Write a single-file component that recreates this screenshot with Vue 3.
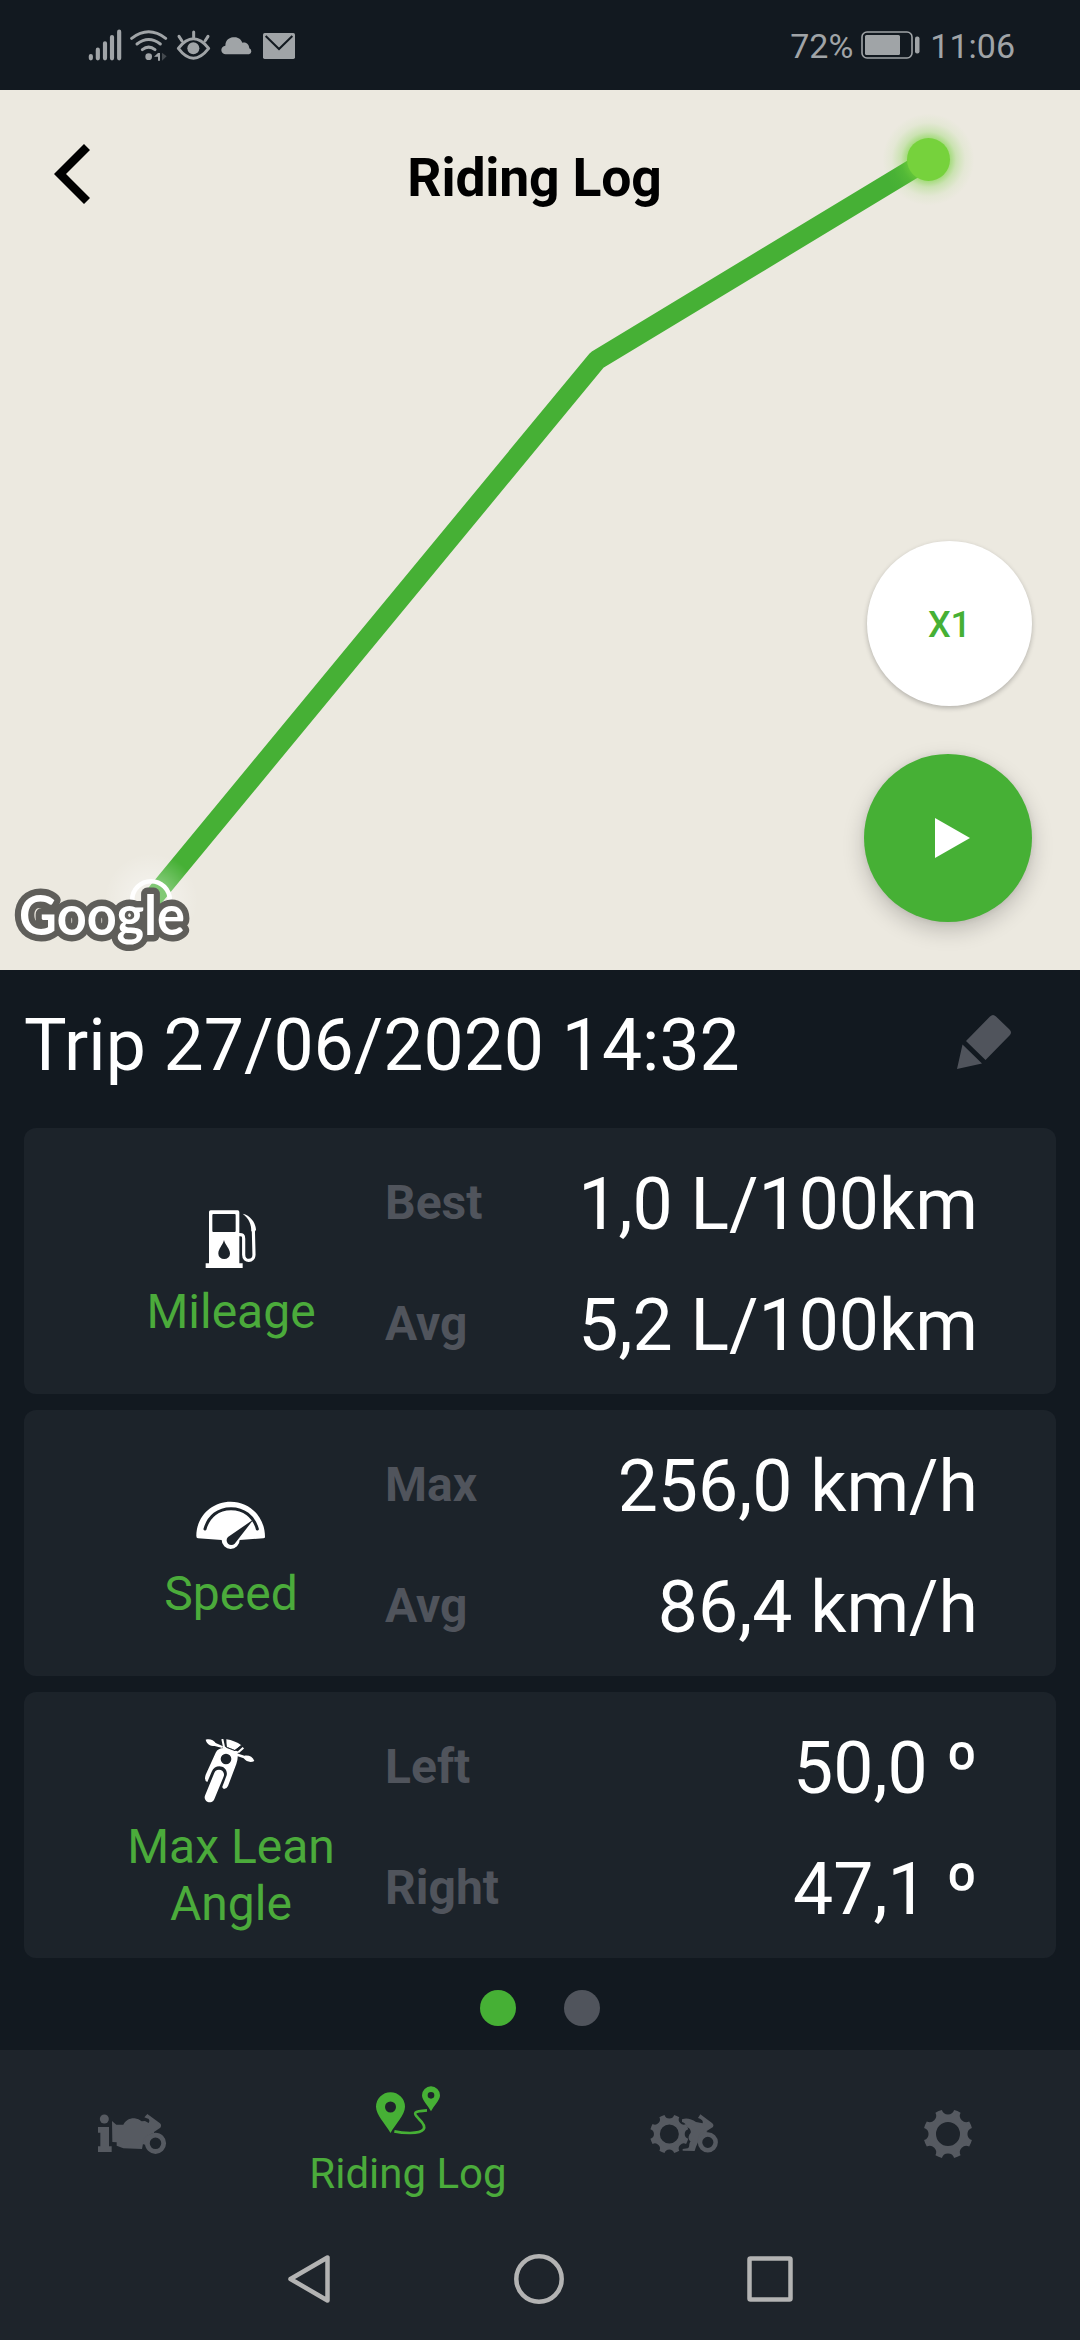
<script setup>
const cards = [
  { icon: 'fuel', title: 'Mileage', rows: [['Best', '1,0 L/100km'], ['Avg', '5,2 L/100km']] },
  { icon: 'gauge', title: 'Speed', rows: [['Max', '256,0 km/h'], ['Avg', '86,4 km/h']] },
  { icon: 'lean', title: 'Max Lean Angle', rows: [['Left', '50,0 º'], ['Right', '47,1 º']] },
]

// Eight-toothed gear with scalloped notches and a round hole.
function gear(cx, cy, r, hole) {
  const half = 0.25
  const n = r * 0.26
  const at = (a) => `${(cx + r * Math.sin(a)).toFixed(2)},${(cy - r * Math.cos(a)).toFixed(2)}`
  let d = `M${at(half)}`
  for (let k = 1; k <= 8; k++) {
    const a = (k * Math.PI) / 4
    d += `A${r},${r} 0 0 1 ${at(a - half)}A${n},${n} 0 0 0 ${at(a + half)}`
  }
  return `${d}ZM${cx - hole},${cy}a${hole},${hole} 0 1 0 ${hole * 2},0a${hole},${hole} 0 1 0 ${-hole * 2},0Z`
}
const bigGear = gear(1044, 522, 74, 36)
const smallGear = gear(208, 523, 58.5, 28.5)
</script>

<template>
  <div class="screen">
    <header class="status">
      <div class="status-icons">
        <svg class="signal" viewBox="54 54 105 102" width="35" height="34">
          <path d="M62.500 138v7M83.500 119v26M105 100v45M126 81v64M147.500 65v80" fill="none" stroke="currentColor" stroke-width="12.500" stroke-linecap="round" />
        </svg>
        <svg class="wifi" viewBox="180 54 114 102" width="38" height="34">
          <g fill="none" stroke="currentColor" stroke-width="9" stroke-linecap="round">
            <path d="M185 85Q236 46 287 85" />
            <path d="M201 102Q236 75 271 102" />
            <path d="M217 119Q236 104 255 119" />
          </g>
          <circle cx="236" cy="140" r="10" fill="currentColor" />
          <path d="M252 140l12-11h6v23h-6v-12z" fill="currentColor" />
          <path d="M276 128v24l14-13z" fill="currentColor" opacity=".35" />
        </svg>
        <svg class="eye" viewBox="318 57 105 96" width="35" height="32">
          <g fill="none" stroke="currentColor" stroke-width="9" stroke-linecap="round" stroke-linejoin="round">
            <path d="M325 115Q370 58 416 115Q370 174 325 115z" />
            <path d="M371 66v16M327 79l9 14M414 79l-9 14" />
          </g>
          <circle cx="370" cy="115" r="18" fill="currentColor" />
        </svg>
        <svg class="cloud" viewBox="453 75 96 57" width="32" height="19">
          <path d="M468 130a13 13 0 0 1-2-26C467 84 480 79 494 79c12 0 19 7 23 16 14-2 20 6 21 17a9.500 9.500 0 0 1-1 18z" fill="currentColor" />
        </svg>
        <svg class="mail" viewBox="579 66 96 84" width="32" height="28">
          <rect x="579" y="69" width="96" height="78" rx="5" fill="currentColor" />
          <path d="M587 78l40 39 40-39" fill="none" stroke="#121920" stroke-width="6" />
        </svg>
      </div>
      <div class="status-right">
        <span>72%</span>
        <svg class="battery" viewBox="0 0 60 28" width="60" height="28">
          <rect x="1" y="1" width="50" height="26" rx="5" fill="none" stroke="currentColor" stroke-width="1.600" />
          <rect x="4" y="4" width="35" height="20" rx="1.500" fill="currentColor" />
          <rect x="54" y="5.500" width="4.500" height="17" rx="2" fill="currentColor" />
        </svg>
        <span>11:06</span>
      </div>
    </header>

    <section class="map">
      <svg class="route" viewBox="0 90 1080 880" width="1080" height="880">
        <defs>
          <radialGradient id="endGlow">
            <stop offset=".4" stop-color="#76d23c" stop-opacity=".75" />
            <stop offset=".6" stop-color="#76d23c" stop-opacity=".28" />
            <stop offset=".8" stop-color="#76d23c" stop-opacity=".07" />
            <stop offset="1" stop-color="#76d23c" stop-opacity="0" />
          </radialGradient>
          <radialGradient id="startGlow">
            <stop offset=".4" stop-color="#fff" stop-opacity=".32" />
            <stop offset="1" stop-color="#fff" stop-opacity="0" />
          </radialGradient>
        </defs>
        <path d="M152 899L597 360 928.500 159.500" fill="none" stroke="#46b035" stroke-width="20" stroke-linejoin="bevel" />
        <circle cx="928.500" cy="159.500" r="46" fill="url(#endGlow)" />
        <circle cx="928.500" cy="159.500" r="21.500" fill="#76d23c" />
        <circle cx="151" cy="900" r="47" fill="url(#startGlow)" />
        <circle cx="151" cy="900" r="18.800" fill="none" stroke="#fff" stroke-width="4.600" />
        <text class="google" x="19" y="935" textLength="166" lengthAdjust="spacingAndGlyphs">Google</text>
      </svg>
      <div class="map-ui">
        <div class="map-head">
          <svg class="back" viewBox="0 0 36 60" width="36" height="60"><path d="M33 3L6 30 33 57" fill="none" stroke="#000" stroke-width="8.500" /></svg>
          <h1>Riding Log</h1>
        </div>
        <div class="map-actions">
          <button class="rate">X1</button>
          <button class="play"><svg viewBox="0 0 35 40" width="35" height="40"><path d="M0 0L35 20 0 40z" fill="#fff" /></svg></button>
        </div>
      </div>
    </section>

    <main class="trip">
      <div class="trip-head">
        <h2>Trip 27/06/2020 14:32</h2>
        <svg class="pencil" viewBox="957 1015 54 54" width="54" height="54">
          <path d="M966 1041L990 1016.500q3-3 6 0L1009.500 1029.500q3 3 0 6L985.500 1060zM962.500 1044.500L982 1063.500 957 1069z" fill="#50545c" />
        </svg>
      </div>

      <article v-for="card in cards" :key="card.title" class="card">
        <div class="kind" :class="card.icon">
          <svg v-if="card.icon === 'fuel'" viewBox="75 69 216 216" width="72" height="72">
            <path fill="#fff" fill-rule="evenodd" d="M117 250V96q0-5 5-5h81q5 0 5 5v154h10v14H107v-14zM130 102q-3 0-3 3v48q0 3 3 3h64q3 0 3-3v-48q0-3-3-3zM162 180c-4 16-17 26-17 41a17.500 16 0 0 0 35 0c0-15-14-25-18-41z" />
            <path d="M206 164c12-1 15 2 15 12v48c0 24 31 22 31 0l-2-76" fill="none" stroke="#fff" stroke-width="9.500" />
            <path d="M218 101c22 5 38 24 40 48l-4 7-10-2c0-20-6-38-26-53z" fill="#fff" />
          </svg>
          <svg v-else-if="card.icon === 'gauge'" viewBox="166 45 216 216" width="72" height="72">
            <path d="M170 198C170 139 216 95 273 95S376 140 376 201q0 4-5 4l-71 5a27 27 0 1 1-54 0l-71-5q-5 0-5-7z" fill="#fff" />
            <path d="M196 177C207 138 236 116 274 116S342 138 353 177" fill="none" stroke="#1c232a" stroke-width="9" stroke-linecap="round" />
            <path d="M342 148L285 221a14 14 0 1 1-20-20z" fill="#1c232a" />
          </svg>
          <svg v-else viewBox="166 807 216 216" width="72" height="72">
            <g fill="#fff">
              <path fill-rule="evenodd" d="M196 925q0-5 2-11l30-66q7-14 25-14 8 0 16 5l22 8q7 10-1 35l-25 66q-4 9-12 9-6-2-5-7l13-34c6-29-34-39-45-11l-13 31q-7-2-7-11zM243 867a16 16 0 1 0 32 0a16 16 0 1 0-32 0z" />
              <path d="M260 808q26 4 45 18l-20 14-24-10z" />
              <path d="M198 809c12-4 24 1 30 10l22 10-2 5-23-6c-15 0-24-7-27-19zM344 873c-12 6-24 2-32-8l-22-8 2-7 22 7c14-2 25 3 30 16z" />
            </g>
            <path d="M238 914L210 982" fill="none" stroke="#fff" stroke-width="30" stroke-linecap="round" />
            <path d="M248 807l5 24M311 833l-15 14M250 831l46 17" fill="none" stroke="#fff" stroke-width="6" />
            <path d="M255 808l5 24 26 10 18-15" fill="none" stroke="#1c232a" stroke-width="3" />
          </svg>
          <span>{{ card.title }}</span>
        </div>
        <dl>
          <div v-for="row in card.rows" :key="row[0]" class="row">
            <dt>{{ row[0] }}</dt>
            <dd>{{ row[1] }}</dd>
          </div>
        </dl>
      </article>

      <div class="pager"><i class="on"></i><i></i></div>
    </main>

    <nav class="tabs">
      <a>
        <svg viewBox="111 279 210 126" width="70" height="42" fill="#565a61">
          <circle cx="133" cy="297" r="13.500" />
          <path d="M114 321h33v58h8v17h-41v-17h7v-41h-7z" />
          <path d="M156 303l13 11h21c8-14 20-20 34-19q12 1 21 9l10-1 11 6c4-6 2-13-6-14l-7-3 9-10 38 28q6 6 1 13l-19 13v9l-27 17-5 5-4 20-56-2-20-8v-10l-13-1z" />
          <circle cx="286.500" cy="370" r="31" fill="#1e242b" />
          <path d="M248 372l4-17 14-12 10 4-15 15-6 12z" />
          <circle cx="286.500" cy="370" r="24.500" fill="none" stroke="#565a61" stroke-width="14.500" />
        </svg>
      </a>
      <a class="active">
        <svg viewBox="945 194 198 150" width="66" height="50" fill="#46b035">
          <path fill-rule="evenodd" d="M991.500 338C976 310 948 283 948 259a43.500 43.500 0 0 1 87 0c0 24-28 51-43.500 79zM975 260a16.500 16.500 0 1 0 33 0a16.500 16.500 0 1 0-33 0z" />
          <path fill-rule="evenodd" d="M1113 273c-9-17-27-33-27-48a27 27 0 0 1 54 0c0 15-18 31-27 48zM1103 225a10 10 0 1 0 20 0a10 10 0 1 0-20 0z" />
          <path d="M1101 270C1060 273 1058 277 1076 295C1106 323 1094 338 1050 338Q1024 338 1003 333" fill="none" stroke="#46b035" stroke-width="8" />
        </svg>
        <span>Riding Log</span>
      </a>
      <a>
        <svg viewBox="147 460 210 126" width="70" height="42" fill="#565a61">
          <path :d="smallGear" fill-rule="evenodd" />
          <path d="M246 479c14-5 28-1 42 8l20 4c2-7-2-12-14-16l7-11 36 27q6 5 2 11l-20 13-6 8-19 25-6 13-4 13-36-1v-5l15-2c8-4 2-16 9-20-8-6-8-17-1-25 4-4-1-16-9-18-2-8-8-14-16-16z" />
          <path d="M291 546l6-22 18-12 8 5z" />
          <circle cx="323.500" cy="548" r="23.500" fill="#1e242b" stroke="#565a61" stroke-width="13.500" />
        </svg>
      </a>
      <a>
        <svg viewBox="969 447 150 150" width="50" height="50" fill="#565a61"><path :d="bigGear" fill-rule="evenodd" /></svg>
      </a>
    </nav>

    <footer class="system">
      <svg viewBox="0 0 44 52" width="44" height="52"><path d="M40.500 4.500V47.500L3.500 26z" /></svg>
      <svg viewBox="0 0 52 52" width="52" height="52"><circle cx="26" cy="26" r="22.700" /></svg>
      <svg viewBox="0 0 46 46" width="46" height="46"><rect x="2.500" y="2.500" width="41" height="41" rx="1" /></svg>
    </footer>
  </div>
</template>

<style>
body {
  margin: 0;
  background: #121920;
}
</style>

<style scoped>
.screen {
  display: flex;
  flex-direction: column;
  width: 1080px;
  height: 2340px;
  overflow: hidden;
  background: #121920;
  color: #fff;
  font-family: Roboto, "Liberation Sans", sans-serif;
}
svg {
  display: block;
  flex: none;
}
h1,
h2,
dl,
dd {
  margin: 0;
}
.status {
  display: flex;
  justify-content: space-between;
  align-items: center;
  box-sizing: border-box;
  height: 90px;
  padding: 0 65px 0 88px;
  color: #a0a4a7;
}
.status-icons,
.status-right {
  display: flex;
  align-items: center;
}
.wifi {
  margin-left: 7px;
}
.eye {
  margin-left: 8px;
}
.cloud {
  margin-left: 10px;
}
.mail {
  margin-left: 10px;
  margin-top: 2px;
}
.status-right {
  font-size: 34px;
  line-height: 40px;
}
.status-right span {
  padding-top: 2px;
}
.battery {
  margin: 0 9px 0 8px;
}
.map {
  display: grid;
  height: 880px;
  background: #ece9e0;
}
.route,
.map-ui {
  grid-area: 1 / 1;
}
.map-ui {
  display: flex;
  flex-direction: column;
  justify-content: space-between;
  z-index: 1;
}
.google {
  font-family: Lato, sans-serif;
  font-size: 55px;
  font-weight: 700;
  fill: #fff;
  stroke: #5f5e5a;
  stroke-width: 13px;
  stroke-linejoin: round;
  paint-order: stroke;
}
.map-head {
  display: grid;
  grid-template-columns: 90px 1fr 90px;
  align-items: center;
  height: 174px;
}
.back {
  margin: -6px 0 0 54px;
}
h1 {
  padding: 1px 11px 0 0;
  color: #000;
  font-size: 53.5px;
  font-weight: 700;
  line-height: 64px;
  letter-spacing: -0.2px;
  text-align: center;
}
.map-actions {
  display: flex;
  flex-direction: column;
  align-items: flex-end;
  gap: 48px;
  padding: 0 48px 48px 0;
}
button {
  display: flex;
  align-items: center;
  justify-content: center;
  box-sizing: border-box;
  padding: 0;
  border: 0;
  border-radius: 50%;
}
.rate {
  width: 165px;
  height: 165px;
  padding-top: 2px;
  background: #fff;
  color: #46b035;
  font: 500 36px/42px Roboto, sans-serif;
  box-shadow: 0 2px 5px rgba(0, 0, 0, 0.24);
}
.play {
  width: 168px;
  height: 168px;
  padding-left: 9px;
  background: #46b035;
  box-shadow: 0 8px 22px rgba(0, 0, 0, 0.2), 0 0 6px rgba(0, 0, 0, 0.08);
}
.trip {
  display: flex;
  flex-direction: column;
  gap: 16px;
  height: 1080px;
  padding: 0 24px;
}
.trip-head {
  display: flex;
  justify-content: space-between;
  align-items: center;
  height: 142px;
  padding-right: 45px;
}
.pencil {
  margin-top: 2px;
}
h2 {
  padding-top: 10px;
  font-size: 71.5px;
  font-weight: 400;
  line-height: 84px;
  white-space: nowrap;
}
.card {
  display: flex;
  box-sizing: border-box;
  height: 266px;
  padding: 16px 78px 8px 76px;
  border-radius: 12px;
  background: #1c232a;
}
.kind {
  display: flex;
  flex-direction: column;
  align-items: center;
  gap: 8px;
  width: 262px;
  margin-right: 23px;
  padding-top: 59px;
  box-sizing: border-box;
  color: #4bab3b;
  font-size: 48px;
  line-height: 57px;
  text-align: center;
}
.kind.lean {
  gap: 7px;
  padding-top: 31px;
}
.kind span {
  width: 240px;
}
dl {
  flex: 1;
}
.row {
  display: flex;
  align-items: center;
  justify-content: space-between;
  height: 121px;
}
dt {
  margin-top: -4px;
  color: #50545c;
  font-size: 48px;
  font-weight: 700;
}
dd {
  font-size: 71.5px;
  white-space: nowrap;
}
.pager {
  display: flex;
  justify-content: center;
  gap: 48px;
  padding-top: 16px;
}
.pager i {
  width: 36px;
  height: 36px;
  border-radius: 50%;
  background: #50545c;
}
.pager .on {
  background: #46b035;
}
.tabs {
  display: grid;
  grid-template-columns: 264px 288px 264px 264px;
  height: 168px;
  background: #1e242b;
}
.tabs a {
  display: flex;
  flex-direction: column;
  align-items: center;
  justify-content: center;
}
.tabs .active {
  justify-content: flex-start;
  gap: 14px;
  padding-top: 35px;
  color: #4bab3b;
  font-size: 42px;
  line-height: 50px;
}
.system {
  display: flex;
  align-items: center;
  justify-content: center;
  height: 122px;
  background: #1e242b;
  gap: 182px;
}
.system svg {
  fill: none;
  stroke: #b3b3b3;
  stroke-width: 4.500px;
  stroke-linejoin: round;
}
</style>
